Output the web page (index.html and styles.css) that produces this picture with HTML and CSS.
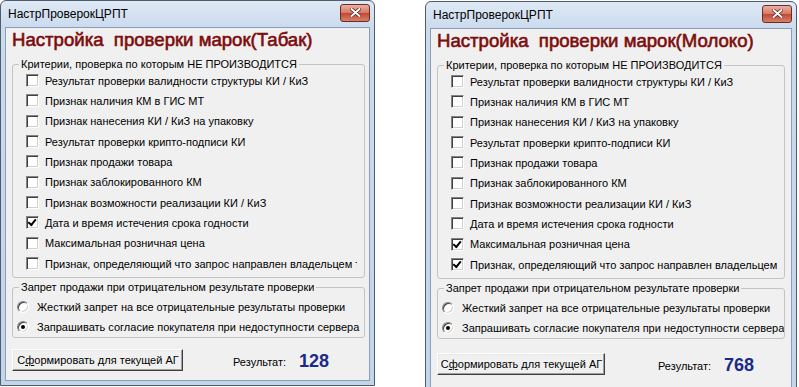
FILE: index.html
```html
<!DOCTYPE html>
<html lang="ru">
<head>
    <meta charset="UTF-8">
    <meta name="viewport" content="width=device-width, initial-scale=1.0">
    <title>НастрПроверокЦРПТ</title>
    <link rel="stylesheet" href="styles.css">
</head>
<body>
    <div class="desktop">
        <!-- Окно: Табак -->
        <div class="window">
            <div class="titlebar">
                <span class="title">НастрПроверокЦРПТ</span>
                <button class="close-btn" title="Закрыть">
                    <svg width="11" height="9" viewBox="0 0 11 9"><path d="M1.5 1 L9.5 8 M9.5 1 L1.5 8" stroke="#5a1a12" stroke-width="3.4" stroke-linecap="round"/><path d="M1.5 1 L9.5 8 M9.5 1 L1.5 8" stroke="#fff" stroke-width="2" stroke-linecap="round"/></svg>
                </button>
            </div>
            <div class="client">
                <h1>Настройка&nbsp; проверки марок(Табак)</h1>
                <fieldset class="group group-checks">
                    <legend>Критерии, проверка по которым НЕ ПРОИЗВОДИТСЯ</legend>
                    <div class="check-row"><span class="check"></span>Результат проверки валидности структуры КИ / КиЗ</div>
                    <div class="check-row"><span class="check"></span>Признак наличия КМ в ГИС МТ</div>
                    <div class="check-row"><span class="check"></span>Признак нанесения КИ / КиЗ на упаковку</div>
                    <div class="check-row"><span class="check"></span>Результат проверки крипто-подписи КИ</div>
                    <div class="check-row"><span class="check"></span>Признак продажи товара</div>
                    <div class="check-row"><span class="check"></span>Признак заблокированного КМ</div>
                    <div class="check-row"><span class="check"></span>Признак возможности реализации КИ / КиЗ</div>
                    <div class="check-row"><span class="check checked"></span>Дата и время истечения срока годности</div>
                    <div class="check-row"><span class="check"></span>Максимальная розничная цена</div>
                    <div class="check-row"><span class="check"></span>Признак, определяющий что запрос направлен владельцем товара</div>
                </fieldset>
                <fieldset class="group group-radios">
                    <legend>Запрет продажи при отрицательном результате проверки</legend>
                    <div class="radio-row"><span class="radio"></span>Жесткий запрет на все отрицательные результаты проверки</div>
                    <div class="radio-row"><span class="radio on"></span>Запрашивать согласие покупателя при недоступности сервера</div>
                </fieldset>
                <div class="footer">
                    <button class="btn">С<u>ф</u>ормировать для текущей АГ</button>
                    <span class="result-label">Результат:</span>
                    <span class="result-value">128</span>
                </div>
            </div>
        </div>

        <!-- Окно: Молоко -->
        <div class="window window-second">
            <div class="titlebar">
                <span class="title">НастрПроверокЦРПТ</span>
                <button class="close-btn" title="Закрыть">
                    <svg width="11" height="9" viewBox="0 0 11 9"><path d="M1.5 1 L9.5 8 M9.5 1 L1.5 8" stroke="#5a1a12" stroke-width="3.4" stroke-linecap="round"/><path d="M1.5 1 L9.5 8 M9.5 1 L1.5 8" stroke="#fff" stroke-width="2" stroke-linecap="round"/></svg>
                </button>
            </div>
            <div class="client">
                <h1>Настройка&nbsp; проверки марок(Молоко)</h1>
                <fieldset class="group group-checks">
                    <legend>Критерии, проверка по которым НЕ ПРОИЗВОДИТСЯ</legend>
                    <div class="check-row"><span class="check"></span>Результат проверки валидности структуры КИ / КиЗ</div>
                    <div class="check-row"><span class="check"></span>Признак наличия КМ в ГИС МТ</div>
                    <div class="check-row"><span class="check"></span>Признак нанесения КИ / КиЗ на упаковку</div>
                    <div class="check-row"><span class="check"></span>Результат проверки крипто-подписи КИ</div>
                    <div class="check-row"><span class="check"></span>Признак продажи товара</div>
                    <div class="check-row"><span class="check"></span>Признак заблокированного КМ</div>
                    <div class="check-row"><span class="check"></span>Признак возможности реализации КИ / КиЗ</div>
                    <div class="check-row"><span class="check"></span>Дата и время истечения срока годности</div>
                    <div class="check-row"><span class="check checked"></span>Максимальная розничная цена</div>
                    <div class="check-row"><span class="check checked"></span>Признак, определяющий что запрос направлен владельцем товара</div>
                </fieldset>
                <fieldset class="group group-radios">
                    <legend>Запрет продажи при отрицательном результате проверки</legend>
                    <div class="radio-row"><span class="radio"></span>Жесткий запрет на все отрицательные результаты проверки</div>
                    <div class="radio-row"><span class="radio on"></span>Запрашивать согласие покупателя при недоступности сервера</div>
                </fieldset>
                <div class="footer">
                    <button class="btn">С<u>ф</u>ормировать для текущей АГ</button>
                    <span class="result-label">Результат:</span>
                    <span class="result-value">768</span>
                </div>
            </div>
        </div>
    </div>
</body>
</html>
```

FILE: styles.css
```css
* { box-sizing: border-box; }

body {
    margin: 0;
    background: #fff;
    font-family: 'Liberation Sans', Arial, sans-serif;
    font-size: 11px;
    color: #000;
    overflow: hidden;
}

.desktop {
    display: flex;
    align-items: flex-start;
    gap: 50px;
}

/* рамка окна */
.window {
    width: 375px;
    height: 386px;
    display: flex;
    flex-direction: column;
    padding: 0 4px 4px;
    border: 1px solid #4f5c6d;
    border-radius: 6px 6px 0 0;
    background: linear-gradient(#dfe9f5, #cbdbee 26px, #c3d5ea);
}

.window-second {
    width: 372px;
    height: 392px;
    margin-top: 1px;
}

.titlebar {
    height: 26px;
    flex: none;
    display: flex;
    align-items: center;
    justify-content: space-between;
    padding-left: 3px;
}

.title {
    font-size: 12px;
}

.close-btn {
    width: 30px;
    height: 18px;
    margin-top: -3px;
    padding: 0;
    display: flex;
    align-items: center;
    justify-content: center;
    border: 1px solid #6e2b20;
    border-radius: 3px;
    background: linear-gradient(#eab0a2, #d67a66 48%, #c24a33 52%, #d7806c);
}

.client {
    flex: 1;
    display: flex;
    flex-direction: column;
    padding: 0 4px 0 6px;
    background: #f0f0f0;
    border: 1px solid #8b9eb6;
}

.window-second .client {
    padding-right: 6px;
}

h1 {
    margin: 1px 0 0;
    font-size: 18.6px;
    line-height: 22px;
    font-weight: normal;
    -webkit-text-stroke: 0.6px #7d0c0c;
    color: #7d0c0c;
    white-space: nowrap;
}

/* групповые рамки */
.group {
    margin: 0;
    min-width: 0;
    border: 1px solid #c4c4c4;
    border-radius: 3px;
}

.group legend {
    padding: 0 2px;
    line-height: 13px;
    white-space: nowrap;
}

.group-checks {
    margin-top: 6.5px;
    padding: 0 7px 3px 13px;
}

.group-checks legend {
    margin-left: -7px;
}

.group-radios {
    margin-top: 3px;
    padding: 3px 0 0 4px;
}

.group-radios legend {
    margin-left: 2px;
}

.check-row {
    height: 20.33px;
    display: flex;
    align-items: center;
    white-space: nowrap;
    overflow: hidden;
}

.check {
    position: relative;
    width: 13px;
    height: 13px;
    flex: none;
    margin-right: 6px;
    background: #fff;
    border: 1px solid;
    border-color: #848484 #fff #fff #848484;
    box-shadow: inset 1px 1px #404040, inset -1px -1px #d4d0c8;
}

.check.checked::after {
    content: '';
    position: absolute;
    left: 3px;
    top: 1px;
    width: 3px;
    height: 6px;
    border: solid #000;
    border-width: 0 2px 2px 0;
    transform: rotate(40deg);
    transform-origin: 60% 40%;
}

.radio-row {
    height: 20px;
    display: flex;
    align-items: center;
    white-space: nowrap;
    overflow: hidden;
}

.radio {
    position: relative;
    width: 12px;
    height: 12px;
    flex: none;
    margin-right: 8px;
    border-radius: 50%;
    background: #fff;
    border: 1px solid;
    border-color: #848484 #fff #fff #848484;
    box-shadow: inset 1px 1px #404040, inset -1px -1px #d4d0c8;
}

.radio.on::after {
    content: '';
    position: absolute;
    left: 3px;
    top: 3px;
    width: 4px;
    height: 4px;
    border-radius: 50%;
    background: #000;
}

/* нижняя строка */
.footer {
    display: flex;
    align-items: center;
    margin-top: 11px;
}

.window-second .footer {
    margin-top: 14px;
}

.btn {
    width: 171px;
    height: 22px;
    padding: 0 0 0 1px;
    font-family: inherit;
    font-size: 11px;
    white-space: nowrap;
    color: #000;
    text-align: center;
    background: #f0f0f0;
    border: 1px solid;
    border-color: #fff #404040 #404040 #fff;
    box-shadow: inset -1px -1px #a0a0a0, inset 1px 1px #e8e8e8;
}

.window-second .btn {
    width: 168px;
}

.result-label {
    margin: 4px 0 0 50px;
}

.window-second .result-label {
    margin-left: 53px;
}

.result-value {
    margin: 2px 0 0 13px;
    font-size: 18px;
    font-weight: bold;
    color: #1b2a86;
}
```
